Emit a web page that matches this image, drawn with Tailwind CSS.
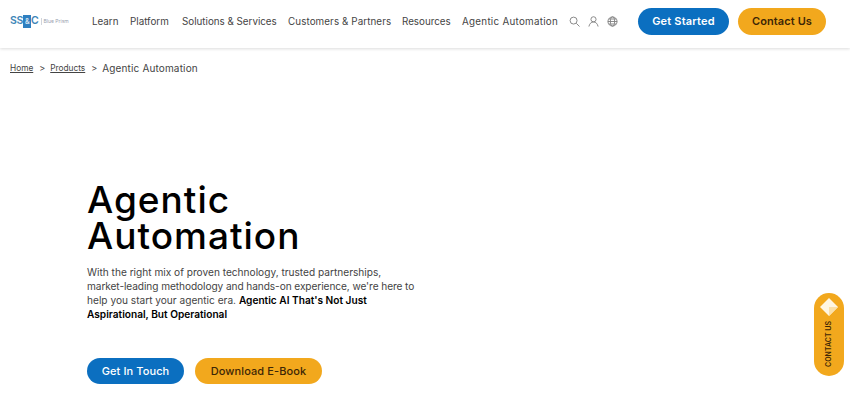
<!DOCTYPE html>
<html lang="en">
<head>
<meta charset="utf-8">
<script src="https://cdn.jsdelivr.net/npm/@tailwindcss/browser@4"></script>
<title>Agentic Automation</title>
</head>
<body class="relative w-[850px] h-[400px] overflow-hidden bg-white font-['Inter',sans-serif] text-[#1a1a1a]">
<header class="h-[48px] flex items-center pl-[10px] pb-[5px] shadow-[0_1px_3px_rgba(0,0,0,0.14)]">
  <div class="w-[82px] flex items-center">
    <span class="flex items-center text-[10.500px] font-semibold leading-none text-[#3f86b8] tracking-[-0.3px]">SS<span class="bg-[#2f7fc0] text-white/80 w-[8px] h-[13px] text-[7px] flex items-center justify-center">&amp;</span>C</span>
    <span class="ml-[2px] pl-[2px] border-l border-gray-300 text-[5px] text-gray-400 leading-[7px]">Blue Prism</span>
  </div>
  <nav class="flex items-center gap-[11px] pt-[1px] text-[9.800px] text-[#444] whitespace-nowrap">
    <span class="w-[27px]">Learn</span><span class="w-[41px]">Platform</span><span class="w-[95px]">Solutions &amp; Services</span><span class="w-[103px] tracking-[0.1px]">Customers &amp; Partners</span><span class="w-[49px]">Resources</span><span class="w-[96px] tracking-[0.28px]">Agentic Automation</span>
  </nav>
  <div class="ml-[11px] flex items-center gap-[8px] text-[#808080]">
    <svg class="w-[11px] h-[11px]" viewBox="0 0 12 12" fill="none" stroke="currentColor" stroke-width="1"><circle cx="5" cy="5" r="3.800"/><path d="M8 8l3.500 3.500"/></svg>
    <svg class="w-[11px] h-[11px]" viewBox="0 0 12 12" fill="none" stroke="currentColor" stroke-width="1"><circle cx="6" cy="3.600" r="2.800"/><path d="M1 11.500c.6-3 2.400-5 5-5s4.400 2 5 5"/></svg>
    <svg class="w-[11px] h-[11px]" viewBox="0 0 12 12" fill="none" stroke="currentColor" stroke-width="1"><circle cx="6" cy="6" r="5"/><ellipse cx="6" cy="6" rx="2.300" ry="5"/><path d="M1 6h10M1.800 3.300h8.400M1.800 8.700h8.400"/></svg>
  </div>
  <a class="ml-[20px] w-[91px] h-[27px] rounded-full bg-[#0b6fc0] text-white text-[11px] tracking-[0.2px] font-semibold flex items-center justify-center">Get Started</a>
  <a class="ml-[9px] w-[88px] h-[27px] rounded-full bg-[#f2a81d] text-[#3d2606] text-[11px] tracking-[0.1px] font-semibold flex items-center justify-center">Contact Us</a>
</header>
<div class="pl-[10px] pt-[14px] flex items-center text-[8.300px] text-[#444] h-[26px]">
  <a class="underline">Home</a><span class="ml-[6px] mr-[5px] text-[9px]">&gt;</span><a class="underline">Products</a><span class="ml-[6px] mr-[5px] text-[9px]">&gt;</span><span class="text-[10px] tracking-[0.15px]">Agentic Automation</span>
</div>
<main class="pl-[87px] pt-[108px]">
  <h1 class="text-[37px] leading-[36px] font-medium text-black tracking-[1px]">Agentic<br>Automation</h1>
  <p class="mt-[11px] w-[345px] text-[10.150px] leading-[14px] text-[#444]">With the right mix of proven technology, trusted partnerships,<br><span class="tracking-[-0.08px]">market-leading methodology and hands-on experience, we're here to</span><br>help you start your agentic era. <b class="font-semibold text-black">Agentic AI That's Not Just<br>Aspirational, But Operational</b></p>
  <div class="mt-[37px] flex gap-[11px]">
    <a class="w-[97px] h-[26px] rounded-full bg-[#0b6fc0] text-white text-[11px] font-medium tracking-[0.1px] flex items-center justify-center">Get In Touch</a>
    <a class="w-[127px] h-[26px] rounded-full bg-[#f2a81d] text-[#3d2606] text-[11px] font-medium tracking-[0.1px] flex items-center justify-center">Download E-Book</a>
  </div>
</main>
<aside class="absolute left-[814px] top-[293px] w-[30px] h-[83px] rounded-full bg-[#f2a81d] flex flex-col items-center pt-[4px]">
  <svg class="w-[20px] h-[20px]" viewBox="0 0 20 20"><path d="M10 1l9 9-9 9-9-9z" fill="#fff6e2"/><path d="M10 10l9 0-9 9z" fill="#fbe0a8"/></svg>
  <span class="mt-[4px] text-[7px] font-semibold text-[#3d2606] whitespace-nowrap [writing-mode:vertical-rl] rotate-180">CONTACT US</span>
</aside>
</body>
</html>
